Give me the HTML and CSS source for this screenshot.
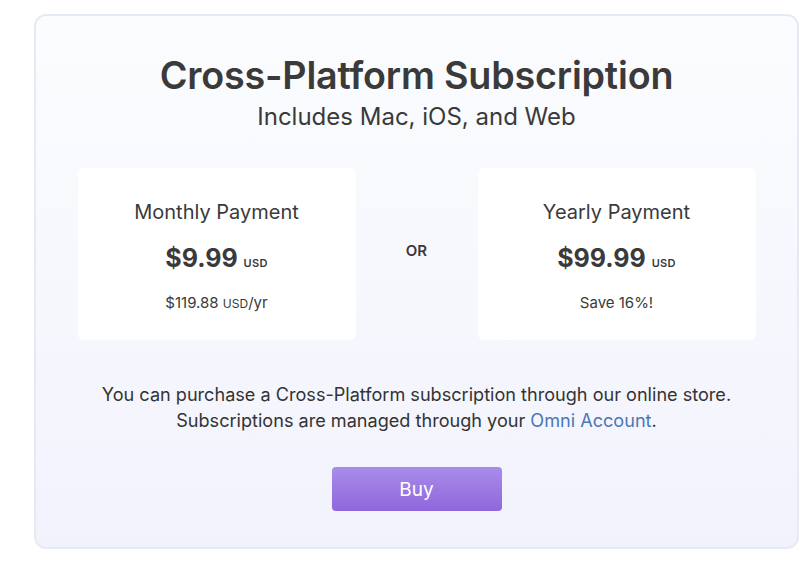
FILE: index.html
```html
<!DOCTYPE html>
<html>
<head>
<meta charset="utf-8">
<link rel="stylesheet" href="styles.css">
</head>
<body>
<div class="panel">
  <h1 class="title">Cross-Platform Subscription</h1>
  <p class="subtitle">Includes Mac, iOS, and Web</p>
  <div class="plans">
    <div class="plan">
      <div class="plan-name">Monthly Payment</div>
      <div class="plan-price">$9.99 <span class="cur">USD</span></div>
      <div class="plan-note">$119.88 <span class="cur-sm">USD</span>/yr</div>
    </div>
    <div class="or">OR</div>
    <div class="plan">
      <div class="plan-name">Yearly Payment</div>
      <div class="plan-price">$99.99 <span class="cur">USD</span></div>
      <div class="plan-note">Save 16%!</div>
    </div>
  </div>
  <p class="info">You can purchase a Cross-Platform subscription through our online store.<br>Subscriptions are managed through your <a class="link" href="#">Omni Account</a>.</p>
  <button class="buy">Buy</button>
</div>
</body>
</html>
```
FILE: styles.css
```css
html, body {
  margin: 0;
  padding: 0;
  background: #ffffff;
}
body {
  font-family: Inter, "Open Sans", "Liberation Sans", sans-serif;
  color: #3a3a3c;
  padding: 14px 12px 0 34px;
}
.panel {
  box-sizing: border-box;
  width: 765px;
  height: 535px;
  border: 2px solid #e5ebf5;
  border-radius: 12px;
  background: linear-gradient(180deg, #fbfcfe 0%, #f6f7fd 60%, #f2f2fd 100%);
  display: flex;
  flex-direction: column;
  align-items: center;
  padding-top: 36px;
}
.title {
  margin: 0;
  font-size: 37.7px;
  line-height: 46px;
  font-weight: 600;
  color: #3a3a3a;
  letter-spacing: -0.2px;
}
.subtitle {
  margin: 4px 0 0;
  font-size: 24px;
  line-height: 30px;
  font-weight: 400;
  color: #3a3a3a;
}
.plans {
  margin-top: 36px;
  width: 678px;
  display: flex;
  align-items: stretch;
}
.plan {
  width: 278px;
  height: 172px;
  background: #ffffff;
  border-radius: 6px;
  display: flex;
  flex-direction: column;
  align-items: center;
  box-sizing: border-box;
  padding-top: 31px;
}
.plan-name {
  font-size: 20px;
  line-height: 26px;
  color: #3a3a3a;
}
.plan-price {
  margin-top: 18px;
  font-size: 25px;
  line-height: 30px;
  font-weight: 700;
  color: #3a3a3a;
}
.cur {
  font-size: 11px;
  font-weight: 600;
  letter-spacing: 0.3px;
}
.plan-note {
  margin-top: 15px;
  font-size: 15px;
  line-height: 20px;
  color: #3a3a3a;
}
.cur-sm {
  font-size: 12px;
}
.or {
  flex: 1;
  text-align: center;
  font-size: 15px;
  font-weight: 600;
  padding-top: 73px;
  color: #3a3a3a;
}
.info {
  margin: 41px 0 0;
  text-align: center;
  font-size: 18.1px;
  line-height: 26px;
  color: #333333;
}
.link {
  color: #4a77b8;
  text-decoration: none;
}
.buy {
  margin-top: 34px;
  width: 170px;
  height: 44px;
  border: none;
  border-radius: 4px;
  background: linear-gradient(180deg, #a88ce9 0%, #8f67dc 100%);
  color: #ffffff;
  font-family: inherit;
  font-size: 19px;
  font-weight: 400;
}
```
